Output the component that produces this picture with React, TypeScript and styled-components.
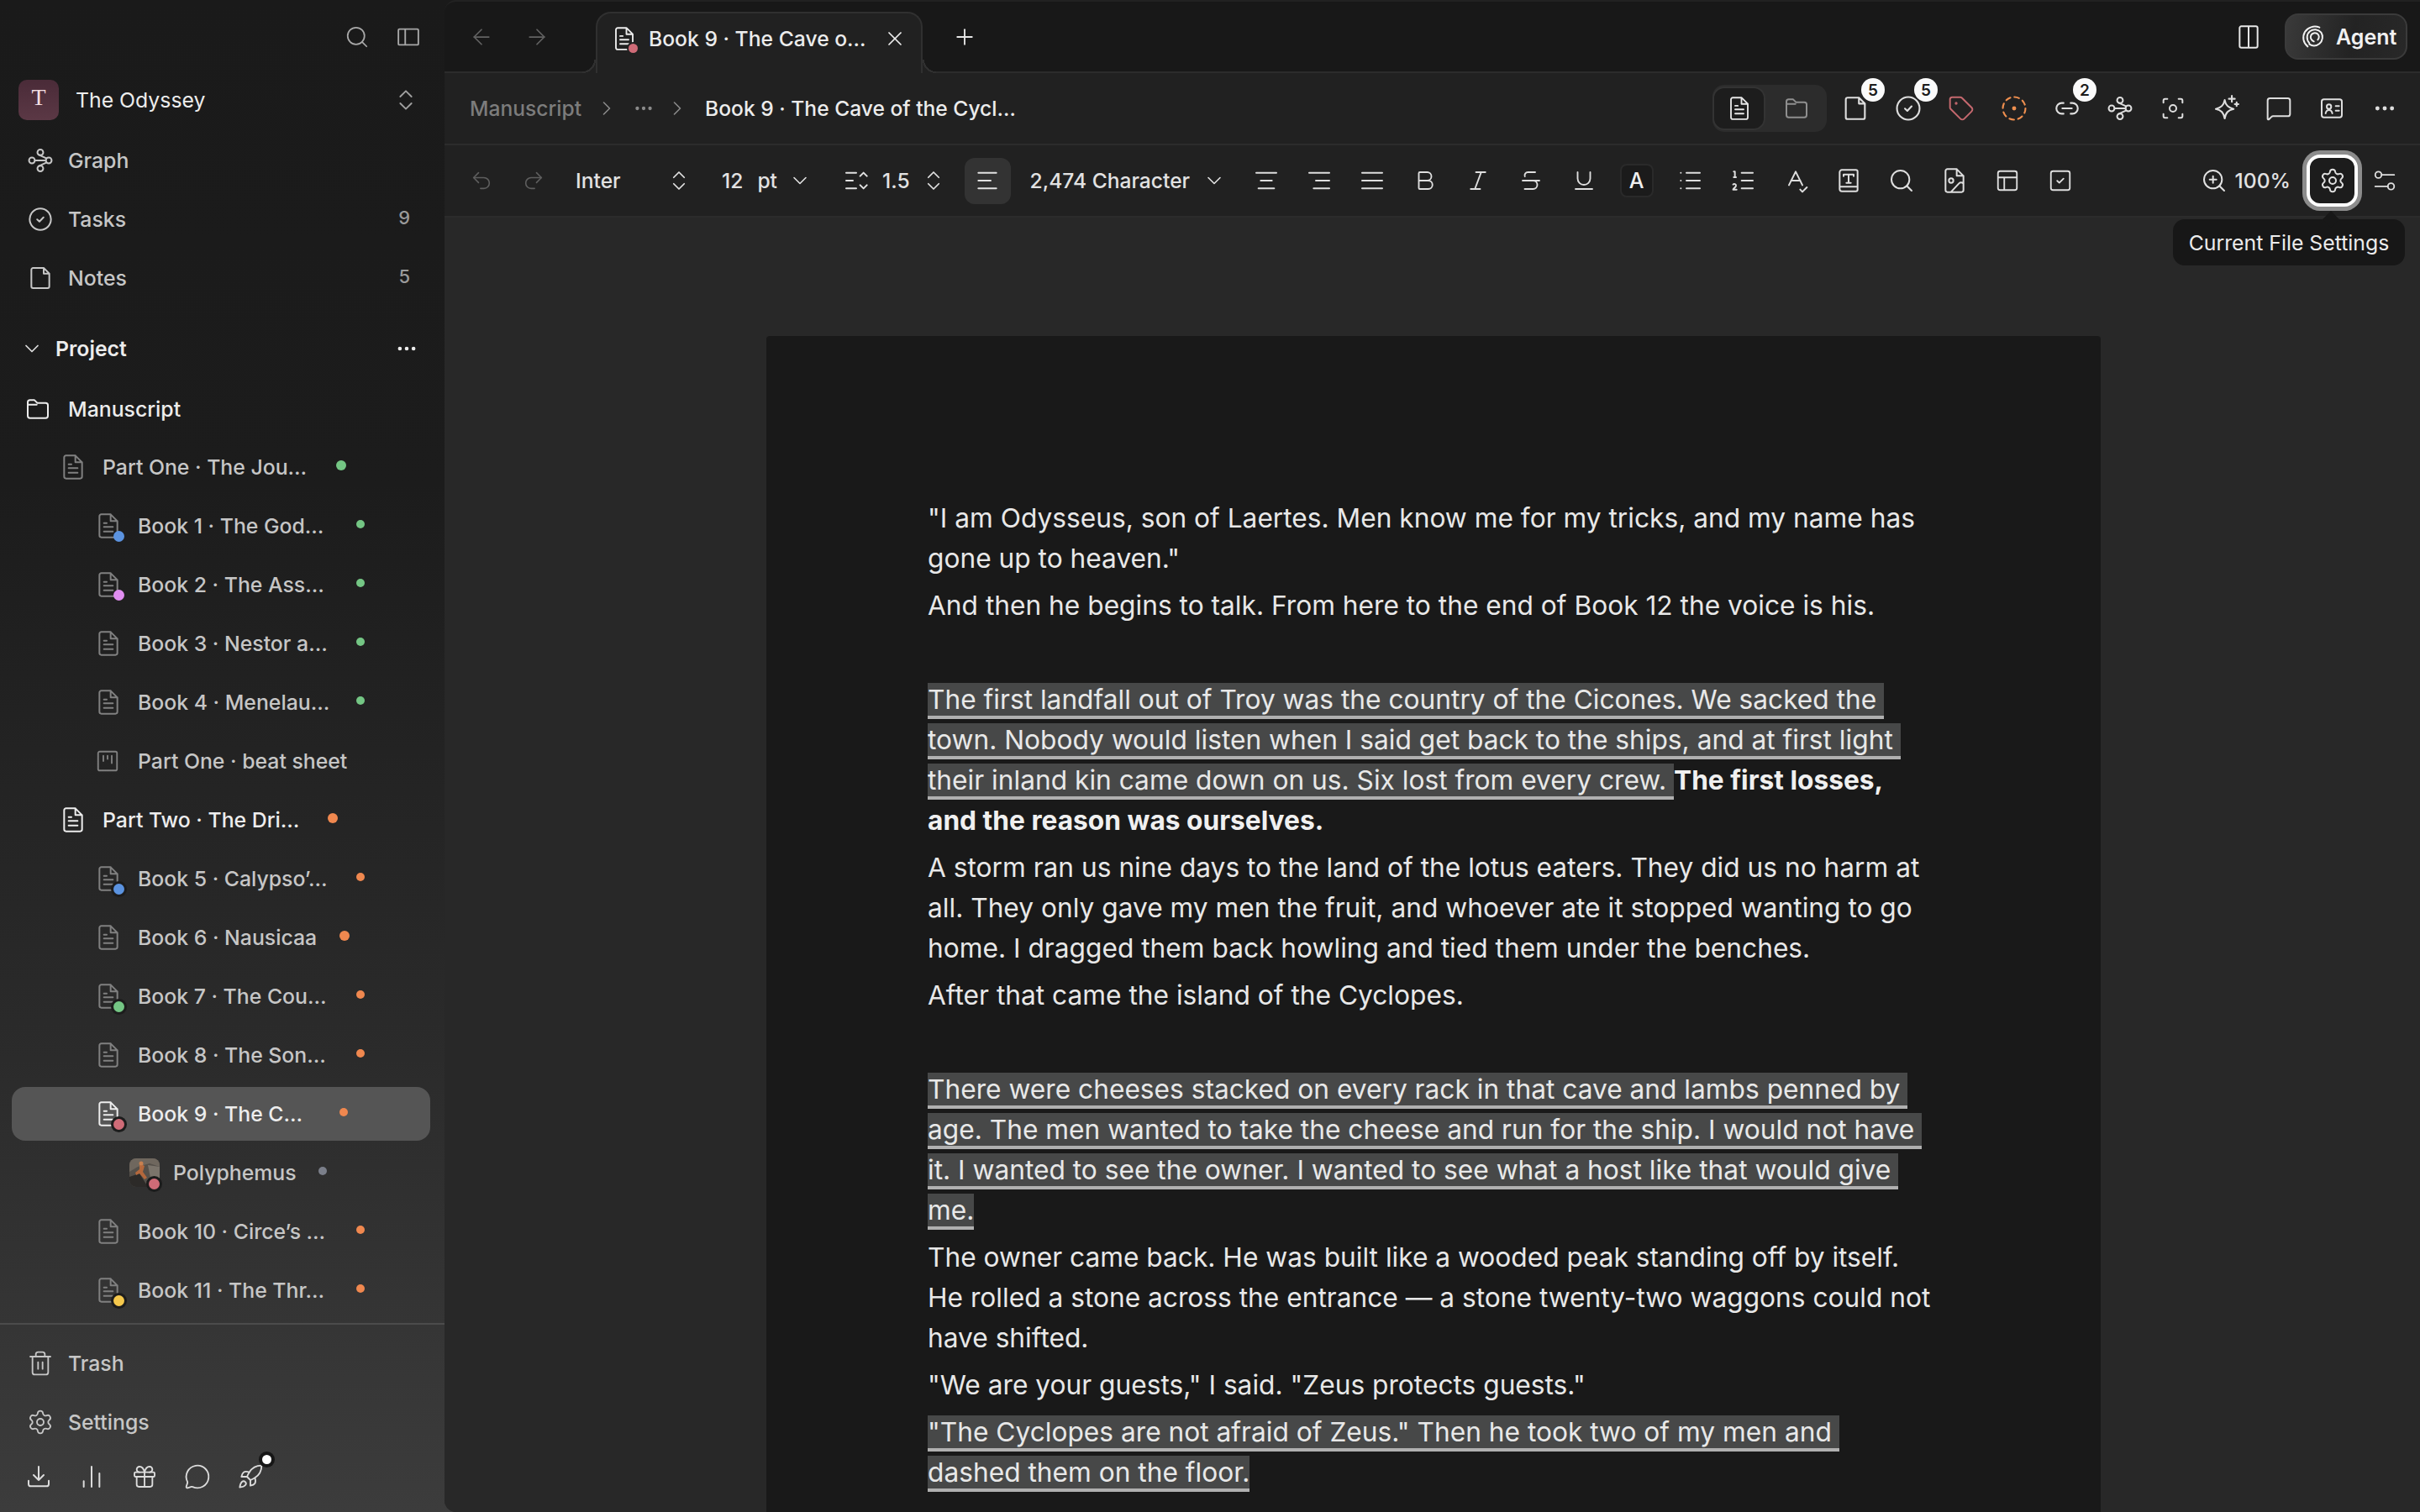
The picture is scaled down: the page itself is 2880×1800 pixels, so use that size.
import React from 'react';
import styled, { createGlobalStyle } from 'styled-components';
import {
    ArrowLeft,
    ArrowRight,
    Bold,
    ChevronDown,
    ChevronRight,
    ChevronsUpDown,
    Gift,
    Italic,
    ListOrdered,
    MessageCircle,
    MessageSquare,
    Plus,
    Redo2,
    Rocket,
    Search,
    Settings,
    SpellCheck,
    Strikethrough,
    Tag,
    Trash2,
    Underline,
    Undo2,
    X,
    ZoomIn,
} from 'lucide-react';

const GlobalStyle = createGlobalStyle`
    html, body {
        margin: 0;
        height: 100%;
        overflow: hidden;
        background: #1a1a1a;
    }
    body, button {
        font-family: Inter, "Liberation Sans", sans-serif;
    }
`;

const colors = {
    green: '#74c684',
    orange: '#f0884f',
    gray: '#7b7f8a',
    blue: '#5b93e0',
    pink: '#e08df0',
    red: '#cf6b77',
    yellow: '#f5c84c',
};

const Svg = styled.svg.attrs({
    viewBox: '0 0 24 24',
    fill: 'none',
    stroke: 'currentColor',
    strokeWidth: 1.5,
    strokeLinecap: 'round',
    strokeLinejoin: 'round',
})<{ $s?: number }>`
    width: ${(p) => p.$s ?? 32}px;
    height: ${(p) => p.$s ?? 32}px;
    flex: none;
    display: block;
`;

type IconProps = { s?: number };

const makeIcon =
    (d: string, extra?: React.ReactNode) =>
    ({ s }: IconProps) => (
        <Svg $s={s}>
            <path d={d} />
            {extra}
        </Svg>
    );

const DocIcon = makeIcon(
    'M6 1.75h8L20 7.75V20.5a1.75 1.75 0 0 1-1.75 1.75H5.75A1.75 1.75 0 0 1 4 20.5V3.5A1.75 1.75 0 0 1 5.75 1.75Z M14 1.75V7.75H20 M8 9.5h2.5 M8 13h8 M8 17h8',
);
const NoteIcon = makeIcon(
    'M6 3h9l5 5v11.5a1.5 1.5 0 0 1-1.5 1.5h-13A1.5 1.5 0 0 1 4 19.5v-15A1.5 1.5 0 0 1 5.5 3Z M15 3v5h5',
);
const FolderIcon = makeIcon(
    'M3 6a2 2 0 0 1 2-2h4l2.5 2.5H19a2 2 0 0 1 2 2V18a2 2 0 0 1-2 2H5a2 2 0 0 1-2-2Z M3 8h8',
);
const PanelIcon = makeIcon('M3.5 4.5h17a1 1 0 0 1 1 1v13a1 1 0 0 1-1 1h-17a1 1 0 0 1-1-1v-13a1 1 0 0 1 1-1Z M9 4.5v15');
const SplitIcon = makeIcon('M5.5 2.5h13a1.5 1.5 0 0 1 1.5 1.5v16a1.5 1.5 0 0 1-1.5 1.5h-13A1.5 1.5 0 0 1 4 20V4a1.5 1.5 0 0 1 1.5-1.5Z M12 2.5v19');
const GraphIcon = ({ s }: IconProps) => (
    <Svg $s={s}>
        <circle cx="12" cy="4.8" r="2.6" />
        <circle cx="12" cy="19.2" r="2.6" />
        <circle cx="4.5" cy="12" r="2.6" />
        <circle cx="19.5" cy="12" r="2.6" />
        <path d="M7.1 12h9.8M10.4 6.8 17.6 10.2M10.4 17.2 17.6 13.8" />
    </Svg>
);
const CheckCircleIcon = makeIcon('M21.5 12a9.5 9.5 0 1 1-19 0 9.5 9.5 0 0 1 19 0Z M9.2 12.2l2 1.9 3.6-3.8');
const DashedIcon = ({ s }: IconProps) => (
    <Svg $s={s}>
        <circle cx="12" cy="12" r="9.5" strokeDasharray="4 3.45" />
        <circle cx="12" cy="12" r="1" fill="currentColor" />
    </Svg>
);
const LinkIcon = makeIcon('M9 7.5H7.5a4.5 4.5 0 0 0 0 9H9 M15 7.5h1.5a4.5 4.5 0 0 1 0 9H15 M8 12h8');
const FocusIcon = ({ s }: IconProps) => (
    <Svg $s={s}>
        <path d="M3.5 7V5a1.5 1.5 0 0 1 1.5-1.5h2M17 3.5h2A1.5 1.5 0 0 1 20.5 5v2M20.5 17v2a1.5 1.5 0 0 1-1.5 1.5h-2M7 20.5H5A1.5 1.5 0 0 1 3.5 19v-2" />
        <circle cx="12" cy="12" r="3" />
    </Svg>
);
const SparkIcon = makeIcon('M11 5c.9 4.6 2.9 6.6 7.5 7.5-4.6.9-6.6 2.9-7.5 8-.9-5.1-2.9-7.1-7.5-8 4.6-.9 6.6-2.9 7.5-7.5Z M17 1.5v5M14.5 4h5M21 7v3M19.5 8.5h3');
const CardIcon = ({ s }: IconProps) => (
    <Svg $s={s}>
        <rect x="3" y="4" width="18" height="16" rx="2" />
        <circle cx="9.5" cy="10.5" r="2" />
        <path d="M6.5 16.5c.4-2 1.5-3 3-3s2.6 1 3 3M15.5 10h3M15.5 14h3" />
    </Svg>
);
const MoreIcon = ({ s }: IconProps) => (
    <Svg $s={s}>
        <circle cx="5.5" cy="12" r="1.1" fill="currentColor" />
        <circle cx="12" cy="12" r="1.1" fill="currentColor" />
        <circle cx="18.5" cy="12" r="1.1" fill="currentColor" />
    </Svg>
);
const BeatIcon = makeIcon('M4.5 3h15A1.5 1.5 0 0 1 21 4.5v15a1.5 1.5 0 0 1-1.5 1.5h-15A1.5 1.5 0 0 1 3 19.5v-15A1.5 1.5 0 0 1 4.5 3Z M8 7v5M12 7v3M16 7v7');
const DownloadIcon = makeIcon('M12 3v12M7.5 10.5 12 15l4.5-4.5M3 15.5v3a2 2 0 0 0 2 2h14a2 2 0 0 0 2-2v-3');
const BarsIcon = makeIcon('M5 16v5M12 3v18M19 9v12');
const LineSpaceIcon = makeIcon('M3 5h9M3 12h6M3 19h9M15.5 8 18.5 5l3 3M15.5 16l3 3 3-3');
const AlignLeftIcon = makeIcon('M4 5h16M4 12h11M4 19h16');
const AlignCenterIcon = makeIcon('M3 5h18M7 12h10M5 19h14');
const AlignRightIcon = makeIcon('M3 5h18M9 12h12M7 19h14');
const JustifyIcon = makeIcon('M3 5h18M3 12h18M3 19h18');
const BulletIcon = makeIcon('M9 5h12M9 12h12M9 19h12M4 5h.01M4 12h.01M4 19h.01');
const BookTIcon = makeIcon(
    'M6 2.5h12.5A1.5 1.5 0 0 1 20 4v16a1.5 1.5 0 0 1-1.5 1.5H6A2 2 0 0 1 4 19.5V4.5A2 2 0 0 1 6 2.5Z M4 17.5h16 M7.5 6.5h9M7.5 6.5v1.5M16.5 6.5v1.5M12 6.5v7.5M10 14h4',
);
const ImageDocIcon = ({ s }: IconProps) => (
    <Svg $s={s}>
        <path d="M6 1.75h8L20 7.75V20.5a1.75 1.75 0 0 1-1.75 1.75H5.75A1.75 1.75 0 0 1 4 20.5V3.5A1.75 1.75 0 0 1 5.75 1.75Z M14 1.75V7.75H20 M9 22l7-7.5c1-1 2.5-1 4 0" />
        <circle cx="9" cy="12" r="2" />
    </Svg>
);
const TableIcon = makeIcon('M5 3h14a2 2 0 0 1 2 2v14a2 2 0 0 1-2 2H5a2 2 0 0 1-2-2V5a2 2 0 0 1 2-2Z M3 9h18M9 9v12');
const CheckBoxIcon = makeIcon('M5 3h14a2 2 0 0 1 2 2v14a2 2 0 0 1-2 2H5a2 2 0 0 1-2-2V5a2 2 0 0 1 2-2Z M9 12.2l2 1.9 4-4');
const SlidersIcon = ({ s }: IconProps) => (
    <Svg $s={s}>
        <circle cx="6" cy="6.5" r="3" />
        <circle cx="18" cy="17.5" r="3" />
        <path d="M9 6.5h12M3 17.5h12" />
    </Svg>
);
const SpiralIcon = makeIcon(
    'M7 20.5C3 17.5 2 12 4.5 7.5 7 3.5 12.5 1.5 17.5 3.5 M8.5 17.5C5.5 14 6 9.5 9 7c3-2.5 7.5-2 10 1 2 3 1.5 7.5-1.5 10-2.5 2-6 2.5-9 .5 M12.5 16c-2.5-1-3.5-3.5-2.5-5.5 1-2 3.5-2.5 5.5-1.5 2 1.5 2 4 .5 5.5',
);

const Shell = styled.div`
    display: flex;
    width: 2880px;
    height: 1800px;
    overflow: hidden;
    background: linear-gradient(#1a1a1a 0%, #1c1c1c 32%, #2b2b2b 70%, #3c3c3c 100%);
`;

/* sidebar */

const Sidebar = styled.aside`
    width: 529px;
    flex: none;
    display: flex;
    flex-direction: column;
    height: 100%;
    font-size: 24.8px;
    font-weight: 500;
`;

const SideTop = styled.div`
    height: 87px;
    flex: none;
    display: flex;
    align-items: center;
    justify-content: flex-end;
    gap: 31px;
    padding-right: 28px;
    color: #a8a8a8;
`;

const Workspace = styled.div`
    height: 64px;
    flex: none;
    display: flex;
    align-items: center;
    padding: 0 30px 0 22px;
    color: #ececec;
    font-weight: 400;
    margin-bottom: 5px;
`;

const Avatar = styled.div`
    width: 48px;
    height: 48px;
    flex: none;
    border-radius: 10px;
    display: flex;
    align-items: center;
    justify-content: center;
    padding-bottom: 6px;
    box-sizing: border-box;
    background: linear-gradient(#4a2b38, #5b3845);
    color: #f3dfe2;
    font: 400 28px 'Liberation Serif', serif;
    margin-right: 20px;
`;

const Grow = styled.span`
    flex: 1;
`;

const NavRow = styled.div<{ $tone?: string }>`
    height: 70px;
    flex: none;
    display: flex;
    align-items: center;
    gap: 17px;
    padding: 0 41px 0 32px;
    color: ${(p) => p.$tone ?? '#c6c6c6'};
`;

const Count = styled.span`
    color: #9a9a9a;
    font-size: 22px;
    margin-top: -4px;
`;

const ProjectRow = styled.div`
    height: 70px;
    flex: none;
    margin-top: 14px;
    display: flex;
    align-items: center;
    gap: 14px;
    padding: 0 30px 0 24px;
    color: #ececec;
    font-weight: 600;
`;

const ManuscriptRow = styled.div`
    height: 70px;
    flex: none;
    margin-top: 2px;
    display: flex;
    align-items: center;
    gap: 20px;
    padding-left: 29px;
    color: #ececec;
    font-weight: 500;
`;

const Tree = styled.div`
    flex: 1;
    min-height: 0;
    overflow: hidden;
    display: flex;
    flex-direction: column;
    gap: 6px;
    padding-top: 2px;
`;

const TreeRow = styled.div<{ $indent: number; $active?: boolean; $bright?: boolean; $gap?: number }>`
    height: 64px;
    flex: none;
    margin: 0 17px 0 14px;
    padding-left: ${(p) => p.$indent}px;
    border-radius: 16px;
    display: flex;
    align-items: center;
    gap: ${(p) => p.$gap ?? 19}px;
    background: ${(p) => (p.$active ? '#555555' : 'transparent')};
    color: ${(p) => (p.$active || p.$bright ? '#ededed' : '#c6c6c6')};
`;

const IconWrap = styled.span<{ $tone: string }>`
    position: relative;
    flex: none;
    display: flex;
    color: ${(p) => p.$tone};
`;

const StatusDot = styled.span<{ $c: string; $ring?: string; $x?: number }>`
    position: absolute;
    right: ${(p) => p.$x ?? -3}px;
    bottom: -3px;
    width: 13px;
    height: 13px;
    border-radius: 50%;
    background: ${(p) => p.$c};
    box-shadow: 0 0 0 ${(p) => (p.$ring ? '3px ' + p.$ring : '0 transparent')};
`;

const Thumb = styled.svg`
    width: 36px;
    height: 34px;
    display: block;
    border-radius: 8px;
`;

const Title = styled.span<{ $w?: number }>`
    flex: none;
    width: ${(p) => (p.$w ? p.$w + 'px' : 'auto')};
    white-space: nowrap;
`;

const Dot = styled.span<{ $c: string; $s: number }>`
    flex: none;
    margin-left: -18px;
    margin-top: -4px;
    width: ${(p) => p.$s}px;
    height: ${(p) => p.$s}px;
    border-radius: 50%;
    background: ${(p) => p.$c};
`;

const Footer = styled.div`
    flex: none;
    border-top: 2px solid #4c4c4c;
    padding-top: 11px;
    height: 225px;
    box-sizing: border-box;
`;

const BottomIcons = styled.div`
    height: 60px;
    display: flex;
    align-items: center;
    padding-left: 30px;
    gap: 31px;
    color: #dcdcdc;
`;

const RocketWrap = styled.span`
    position: relative;
    display: flex;
`;

const WhiteDot = styled.span`
    position: absolute;
    top: -10px;
    right: -9px;
    width: 11px;
    height: 11px;
    border-radius: 50%;
    background: #fff;
    box-shadow: 0 0 0 4px #161616;
`;

/* main */

const Main = styled.main`
    flex: 1;
    min-width: 0;
    display: flex;
    flex-direction: column;
    overflow: hidden;
    border-radius: 14px 0 0 14px;
    background: #282828;
    border-top: 2px solid #222;
    box-sizing: border-box;
`;

const TabBar = styled.div`
    height: 83px;
    flex: none;
    display: flex;
    align-items: flex-end;
    background: #181818;
    border-bottom: 2px solid #2c2c2c;
    padding: 0 15px 0 13px;
    color: #e6e6e6;
`;

const TabSlot = styled.div<{ $w?: number; $tone?: string; $ml?: number; $mr?: number }>`
    width: ${(p) => p.$w ?? 62}px;
    height: 83px;
    margin-left: ${(p) => p.$ml ?? 0}px;
    margin-right: ${(p) => p.$mr ?? 0}px;
    flex: none;
    display: flex;
    align-items: center;
    justify-content: center;
    color: ${(p) => p.$tone ?? '#e6e6e6'};
`;

const Tab = styled.div`
    position: relative;
    width: 389px;
    height: 73px;
    margin-bottom: -2px;
    margin-left: 35px;
    box-sizing: border-box;
    flex: none;
    display: flex;
    align-items: center;
    padding: 0 17px 12px 17px;
    gap: 14px;
    font-size: 24.7px;
    font-weight: 500;
    color: #ececec;
    background: #212121;
    border: 2px solid #303030;
    border-bottom: none;
    border-radius: 18px 18px 0 0;

    &::before,
    &::after {
        content: '';
        position: absolute;
        bottom: 0;
        width: 16px;
        height: 16px;
    }
    &::before {
        left: -18px;
        background: radial-gradient(circle at 0 0, transparent 14px, #303030 14px, #303030 16px, #212121 16px);
    }
    &::after {
        right: -18px;
        background: radial-gradient(circle at 100% 0, transparent 14px, #303030 14px, #303030 16px, #212121 16px);
    }
`;

const TabTitle = styled.span`
    flex: 1;
    white-space: nowrap;
`;

const TabDot = styled.span`
    position: absolute;
    left: -2px;
    bottom: -2px;
    width: 11px;
    height: 11px;
    border-radius: 50%;
    background: ${colors.red};
    transform: translate(22px, 0);
    box-shadow: 0 0 0 2px #212121;
`;

const TabSpring = styled.span`
    flex: 1;
`;

const AgentButton = styled.button`
    width: 146px;
    height: 55px;
    margin-bottom: 14px;
    flex: none;
    display: flex;
    align-items: center;
    gap: 11px;
    padding: 0 0 0 16px;
    box-sizing: border-box;
    border: 2px solid #3b3b3b;
    border-radius: 16px;
    background: linear-gradient(100deg, #3a3a3a, #232323 55%, #282828);
    color: #f1f1f1;
    font-size: 25px;
    font-weight: 600;
`;

const HeaderRow = styled.div`
    height: 84px;
    flex: none;
    display: flex;
    align-items: center;
    background: #212121;
    border-bottom: 2px solid #2c2c2c;
    padding: 0 11px 0 30px;
    font-size: 24.6px;
    font-weight: 500;
    color: #ececec;
`;

const Crumb = styled.span<{ $tone?: string }>`
    color: ${(p) => p.$tone ?? '#ececec'};
    white-space: nowrap;
`;

const CrumbSep = styled.span<{ $ml?: number; $mr?: number }>`
    display: flex;
    color: #8a8a8a;
    margin-left: ${(p) => p.$ml ?? 0}px;
    margin-right: ${(p) => p.$mr ?? 0}px;
`;

const Segmented = styled.div`
    width: 136px;
    height: 56px;
    margin-left: auto;
    margin-right: 2px;
    flex: none;
    display: flex;
    align-items: center;
    background: #2c2c2c;
    border-radius: 14px;
    color: #8f8f8f;
`;

const SegmentActive = styled.span`
    width: 63px;
    height: 52px;
    flex: none;
    display: flex;
    align-items: center;
    justify-content: center;
    background: #1d1d1d;
    border: 2px solid #333;
    border-radius: 14px;
    box-sizing: border-box;
    color: #e6e6e6;
`;

const SegmentRest = styled.span`
    flex: 1;
    display: flex;
    justify-content: center;
`;

const IconSlot = styled.div<{ $tone?: string; $w?: number }>`
    position: relative;
    width: ${(p) => p.$w ?? 63}px;
    height: 64px;
    flex: none;
    display: flex;
    align-items: center;
    justify-content: center;
    color: ${(p) => p.$tone ?? '#dedede'};
`;

const Badge = styled.span`
    position: absolute;
    top: -4px;
    left: 39px;
    width: 28px;
    height: 28px;
    border-radius: 50%;
    background: #fafafa;
    color: #1b1b1b;
    font-size: 19px;
    font-weight: 600;
    display: flex;
    align-items: center;
    justify-content: center;
`;

const Toolbar = styled.div`
    height: 84px;
    flex: none;
    display: flex;
    align-items: center;
    background: #212121;
    border-bottom: 2px solid #2c2c2c;
    padding: 0 15px 0 13px;
    font-size: 24.6px;
    font-weight: 500;
    color: #e2e2e2;
`;

const Field = styled.div<{ $w?: number; $ml: number }>`
    width: ${(p) => (p.$w ? p.$w + 'px' : 'auto')};
    margin-left: ${(p) => p.$ml}px;
    flex: none;
    display: flex;
    align-items: center;
    color: #e2e2e2;
    white-space: nowrap;
`;

const FieldGap = styled.span<{ $w: number }>`
    flex: none;
    width: ${(p) => p.$w}px;
`;

const AlignActive = styled.span`
    width: 55px;
    height: 55px;
    margin-left: 22px;
    flex: none;
    display: flex;
    align-items: center;
    justify-content: center;
    border-radius: 12px;
    background: #333333;
`;

const ColorSwatch = styled.span`
    width: 40px;
    height: 40px;
    box-sizing: border-box;
    display: flex;
    align-items: center;
    justify-content: center;
    border: 2px solid #2a2a2a;
    border-radius: 8px;
    background: #1b1b1b;
    color: #f0f0f0;
    font-size: 25px;
    font-weight: 500;
`;

const FocusRing = styled.div`
    position: relative;
    width: 61px;
    height: 62px;
    margin: 0 5px;
    flex: none;
    box-sizing: border-box;
    display: flex;
    align-items: center;
    justify-content: center;
    background: #1c1c1c;
    border: 4px solid #fff;
    border-radius: 16px;
    box-shadow: 0 0 0 5px #8c8c8c;
    color: #dedede;
`;

const Tooltip = styled.div`
    position: absolute;
    top: 73px;
    right: -60px;
    width: 276px;
    height: 55px;
    z-index: 5;
    display: flex;
    align-items: center;
    justify-content: center;
    background: #171717;
    border-radius: 14px;
    color: #ececec;
    font-size: 24.8px;
    font-weight: 400;
    white-space: nowrap;

    &::before {
        content: '';
        position: absolute;
        top: -7px;
        right: 81px;
        width: 14px;
        height: 14px;
        background: #171717;
        transform: rotate(45deg);
    }
`;

const Canvas = styled.div`
    flex: 1;
    min-height: 0;
    overflow: hidden;
    padding: 141px 0 0 383px;
    background: #282828;
`;

const Paper = styled.article`
    width: 1588px;
    box-sizing: border-box;
    padding: 193px 199px 0 192px;
    min-height: 1500px;
    background: #191919;
    border-radius: 4px 4px 0 0;
    color: #e8e8e8;
    font-size: 31.7px;
    line-height: 48px;
`;

const Para = styled.p`
    margin: 0 0 8px;
    min-height: 48px;
`;

const Mark = styled.span`
    background: #474848;
    border-bottom: 4px solid #b0b0b0;
    white-space: break-spaces;
`;

const Strong = styled.strong`
    font-weight: 700;
    color: #f0f0f0;
`;

type Row = {
    title: string;
    indent: number;
    w?: number;
    dot?: { c: string; s: number };
    status?: { c: string; ring?: string };
    bright?: boolean;
    active?: boolean;
    kind?: 'beat' | 'thumb';
};

const rows: Row[] = [
    { title: 'Part One · The Jou…', indent: 57, w: 277, dot: { c: colors.green, s: 12 } },
    { title: 'Book 1 · The God…', indent: 99, w: 259, dot: { c: colors.green, s: 10 }, status: { c: colors.blue } },
    { title: 'Book 2 · The Ass…', indent: 99, w: 259, dot: { c: colors.green, s: 10 }, status: { c: colors.pink } },
    { title: 'Book 3 · Nestor a…', indent: 99, w: 259, dot: { c: colors.green, s: 10 } },
    { title: 'Book 4 · Menelau…', indent: 99, w: 259, dot: { c: colors.green, s: 10 } },
    { title: 'Part One · beat sheet', indent: 99, kind: 'beat' },
    { title: 'Part Two · The Dri…', indent: 57, w: 267, dot: { c: colors.orange, s: 12 }, bright: true },
    { title: 'Book 5 · Calypso’…', indent: 99, w: 259, dot: { c: colors.orange, s: 10 }, status: { c: colors.blue, ring: '#1c1c1c' } },
    { title: 'Book 6 · Nausicaa', indent: 99, w: 239, dot: { c: colors.orange, s: 12 } },
    { title: 'Book 7 · The Cou…', indent: 99, w: 259, dot: { c: colors.orange, s: 10 }, status: { c: colors.green, ring: '#1c1c1c' } },
    { title: 'Book 8 · The Son…', indent: 99, w: 259, dot: { c: colors.orange, s: 10 } },
    { title: 'Book 9 · The C…', indent: 99, w: 239, dot: { c: colors.orange, s: 10 }, status: { c: colors.red, ring: '#1c1c1c' }, active: true },
    { title: 'Polyphemus', indent: 140, w: 175, dot: { c: colors.gray, s: 10 }, status: { c: colors.red, ring: '#1c1c1c' }, kind: 'thumb' },
    { title: 'Book 10 · Circe’s …', indent: 99, w: 259, dot: { c: colors.orange, s: 10 } },
    { title: 'Book 11 · The Thr…', indent: 99, w: 259, dot: { c: colors.orange, s: 10 }, status: { c: colors.yellow, ring: '#1c1c1c' } },
];

const rowGap = (row: Row) => {
    if (row.kind === 'thumb') return 16;
    if (row.kind === 'beat') return 21;
    return 19;
};

const PolyphemusThumb = () => (
    <Thumb viewBox="0 0 36 34">
        <rect width="36" height="34" fill="#55504a" />
        <path d="M0 0h36v10L24 6 10 10 0 16Z" fill="#6f675e" />
        <path d="M22 8l14 2v14l-10 4Z" fill="#7b746b" />
        <path d="M0 22l12-4 10 16H0Z" fill="#2c2a28" />
        <path d="M12 6l6 3-2 7 5 7-3 2-6-7-4 2-1-3 5-4Z" fill="#b4683c" />
        <circle cx="14" cy="6" r="2.5" fill="#c78050" />
    </Thumb>
);

const treeIcon = (row: Row) => {
    if (row.kind === 'thumb') return <PolyphemusThumb />;
    if (row.kind === 'beat') return <BeatIcon s={30} />;
    return <DocIcon />;
};

const toneFor = (row: Row) => (row.active || row.bright ? '#ededed' : '#808080');

const toolbarIcons: { key: string; node: React.ReactNode }[] = [
    { key: 'center', node: <AlignCenterIcon /> },
    { key: 'right', node: <AlignRightIcon /> },
    { key: 'justify', node: <JustifyIcon /> },
    { key: 'bold', node: <Bold size={30} strokeWidth={1.5} /> },
    { key: 'italic', node: <Italic size={30} strokeWidth={1.5} /> },
    { key: 'strike', node: <Strikethrough size={30} strokeWidth={1.5} /> },
    { key: 'under', node: <Underline size={30} strokeWidth={1.5} /> },
    { key: 'color', node: <ColorSwatch>A</ColorSwatch> },
    { key: 'bullet', node: <BulletIcon /> },
    { key: 'ordered', node: <ListOrdered size={32} strokeWidth={1.5} /> },
    { key: 'spell', node: <SpellCheck size={32} strokeWidth={1.5} /> },
    { key: 'book', node: <BookTIcon /> },
    { key: 'find', node: <Search size={32} strokeWidth={1.5} /> },
    { key: 'image', node: <ImageDocIcon /> },
    { key: 'table', node: <TableIcon s={30} /> },
    { key: 'check', node: <CheckBoxIcon s={30} /> },
];

const headerIcons: { key: string; node: React.ReactNode; tone?: string; badge?: string }[] = [
    { key: 'notes', node: <NoteIcon s={34} />, badge: '5' },
    { key: 'tasks', node: <CheckCircleIcon s={34} />, badge: '5' },
    { key: 'tags', node: <Tag size={32} strokeWidth={1.5} />, tone: '#c4686e' },
    { key: 'status', node: <DashedIcon s={34} />, tone: '#ef8f4f' },
    { key: 'links', node: <LinkIcon s={34} />, badge: '2' },
    { key: 'graph', node: <GraphIcon s={32} /> },
    { key: 'focus', node: <FocusIcon s={32} /> },
    { key: 'spark', node: <SparkIcon s={34} /> },
    { key: 'comment', node: <MessageSquare size={32} strokeWidth={1.5} /> },
    { key: 'card', node: <CardIcon s={32} /> },
    { key: 'more', node: <MoreIcon s={32} /> },
];

export default function App() {
    return (
        <>
            <GlobalStyle />
            <Shell>
                <Sidebar>
                    <SideTop>
                        <Search size={30} strokeWidth={1.4} />
                        <PanelIcon s={30} />
                    </SideTop>
                    <Workspace>
                        <Avatar>T</Avatar>
                        <span>The Odyssey</span>
                        <Grow />
                        <ChevronsUpDown size={32} strokeWidth={1.4} color="#a0a0a0" />
                    </Workspace>
                    <NavRow>
                        <GraphIcon />
                        <span>Graph</span>
                    </NavRow>
                    <NavRow>
                        <CheckCircleIcon />
                        <span>Tasks</span>
                        <Grow />
                        <Count>9</Count>
                    </NavRow>
                    <NavRow>
                        <NoteIcon />
                        <span>Notes</span>
                        <Grow />
                        <Count>5</Count>
                    </NavRow>
                    <ProjectRow>
                        <ChevronDown size={28} strokeWidth={1.5} color="#dedede" />
                        <span>Project</span>
                        <Grow />
                        <MoreIcon s={30} />
                    </ProjectRow>
                    <ManuscriptRow>
                        <FolderIcon />
                        <span>Manuscript</span>
                    </ManuscriptRow>
                    <Tree>
                        {rows.map((row) => (
                            <TreeRow
                                key={row.title}
                                $indent={row.indent}
                                $active={row.active}
                                $bright={row.bright}
                                $gap={rowGap(row)}
                            >
                                <IconWrap $tone={toneFor(row)}>
                                    {treeIcon(row)}
                                    {row.status && (
                                        <StatusDot
                                            $c={row.status.c}
                                            $ring={row.status.ring}
                                            $x={row.kind === 'thumb' ? 0 : -3}
                                        />
                                    )}
                                </IconWrap>
                                <Title $w={row.w}>{row.title}</Title>
                                {row.dot && <Dot $c={row.dot.c} $s={row.dot.s} />}
                            </TreeRow>
                        ))}
                    </Tree>
                    <Footer>
                        <NavRow>
                            <Trash2 size={32} strokeWidth={1.4} />
                            <span>Trash</span>
                        </NavRow>
                        <NavRow>
                            <Settings size={32} strokeWidth={1.4} />
                            <span>Settings</span>
                        </NavRow>
                        <BottomIcons>
                            <DownloadIcon />
                            <BarsIcon />
                            <Gift size={32} strokeWidth={1.4} />
                            <MessageCircle size={32} strokeWidth={1.4} />
                            <RocketWrap>
                                <Rocket size={32} strokeWidth={1.4} />
                                <WhiteDot />
                            </RocketWrap>
                        </BottomIcons>
                    </Footer>
                </Sidebar>
                <Main>
                    <TabBar>
                        <TabSlot $tone="#626262">
                            <ArrowLeft size={30} strokeWidth={1.4} />
                        </TabSlot>
                        <TabSlot $w={70} $tone="#626262">
                            <ArrowRight size={30} strokeWidth={1.4} />
                        </TabSlot>
                        <Tab>
                            <IconWrap $tone="#ececec">
                                <DocIcon s={30} />
                                <TabDot />
                            </IconWrap>
                            <TabTitle>Book 9 · The Cave o…</TabTitle>
                            <X size={28} strokeWidth={1.5} />
                        </Tab>
                        <TabSlot $w={62} $ml={19}>
                            <Plus size={30} strokeWidth={1.5} />
                        </TabSlot>
                        <TabSpring />
                        <TabSlot $w={70} $mr={8}>
                            <SplitIcon s={32} />
                        </TabSlot>
                        <AgentButton>
                            <SpiralIcon s={32} />
                            Agent
                        </AgentButton>
                    </TabBar>
                    <HeaderRow>
                        <Crumb $tone="#7c7c7c">Manuscript</Crumb>
                        <CrumbSep $ml={16} $mr={16}>
                            <ChevronRight size={28} strokeWidth={1.4} />
                        </CrumbSep>
                        <CrumbSep>
                            <MoreIcon s={28} />
                        </CrumbSep>
                        <CrumbSep $ml={12} $mr={19}>
                            <ChevronRight size={28} strokeWidth={1.4} />
                        </CrumbSep>
                        <Crumb>Book 9 · The Cave of the Cycl…</Crumb>
                        <Segmented>
                            <SegmentActive>
                                <DocIcon s={30} />
                            </SegmentActive>
                            <SegmentRest>
                                <FolderIcon s={32} />
                            </SegmentRest>
                        </Segmented>
                        {headerIcons.map((item) => (
                            <IconSlot key={item.key} $tone={item.tone}>
                                {item.node}
                                {item.badge && <Badge>{item.badge}</Badge>}
                            </IconSlot>
                        ))}
                    </HeaderRow>
                    <Toolbar>
                        <IconSlot $w={62} $tone="#5e5e5e">
                            <Undo2 size={28} strokeWidth={1.4} />
                        </IconSlot>
                        <IconSlot $w={62} $tone="#5e5e5e">
                            <Redo2 size={28} strokeWidth={1.4} />
                        </IconSlot>
                        <Field $w={140} $ml={19}>
                            Inter
                            <Grow />
                            <ChevronsUpDown size={30} strokeWidth={1.4} />
                            <FieldGap $w={2} />
                        </Field>
                        <Field $w={110} $ml={34}>
                            12
                            <FieldGap $w={17} />
                            pt
                            <Grow />
                            <ChevronDown size={28} strokeWidth={1.4} />
                            <FieldGap $w={3} />
                        </Field>
                        <Field $ml={34}>
                            <LineSpaceIcon s={32} />
                            <FieldGap $w={15} />
                            1.5
                            <FieldGap $w={13} />
                            <ChevronsUpDown size={30} strokeWidth={1.4} />
                        </Field>
                        <AlignActive>
                            <AlignLeftIcon />
                        </AlignActive>
                        <Field $ml={23}>
                            2,474 Character
                            <FieldGap $w={15} />
                            <ChevronDown size={28} strokeWidth={1.4} />
                        </Field>
                        <FieldGap $w={16} />
                        {toolbarIcons.map((item) => (
                            <IconSlot key={item.key}>{item.node}</IconSlot>
                        ))}
                        <Grow />
                        <Field $ml={0}>
                            <ZoomIn size={32} strokeWidth={1.5} />
                            <FieldGap $w={9} />
                            100%
                            <FieldGap $w={14} />
                        </Field>
                        <FocusRing>
                            <Settings size={32} strokeWidth={1.5} />
                            <Tooltip>Current File Settings</Tooltip>
                        </FocusRing>
                        <IconSlot $w={54}>
                            <SlidersIcon s={30} />
                        </IconSlot>
                    </Toolbar>
                    <Canvas>
                        <Paper>
                            <Para>"I am Odysseus, son of Laertes. Men know me for my tricks, and my name has gone up to heaven."</Para>
                            <Para>And then he begins to talk. From here to the end of Book 12 the voice is his.</Para>
                            <Para />
                            <Para>
                                <Mark>
                                    {'The first landfall out of Troy was the country of the Cicones. We sacked the town. Nobody would listen when I said get back to the ships, and at first light their inland kin came down on us. Six lost from every crew. '}
                                </Mark>
                                <Strong>The first losses, and the reason was ourselves.</Strong>
                            </Para>
                            <Para>
                                A storm ran us nine days to the land of the lotus eaters. They did us no harm at all. They only gave my men the fruit, and whoever ate it stopped wanting to go home. I dragged them back howling and tied them under the benches.
                            </Para>
                            <Para>After that came the island of the Cyclopes.</Para>
                            <Para />
                            <Para>
                                <Mark>
                                    There were cheeses stacked on every rack in that cave and lambs penned by age. The men wanted to take the cheese and run for the ship. I would not have it. I wanted to see the owner. I wanted to see what a host like that would give me.
                                </Mark>
                            </Para>
                            <Para>
                                The owner came back. He was built like a wooded peak standing off by itself. He rolled a stone across the entrance — a stone twenty-two waggons could not have shifted.
                            </Para>
                            <Para>"We are your guests," I said. "Zeus protects guests."</Para>
                            <Para>
                                <Mark>
                                    {'"The Cyclopes are not afraid of Zeus." Then he took two of my men and '}
                                    <br />
                                    dashed them on the floor.
                                </Mark>
                            </Para>
                        </Paper>
                    </Canvas>
                </Main>
            </Shell>
        </>
    );
}
